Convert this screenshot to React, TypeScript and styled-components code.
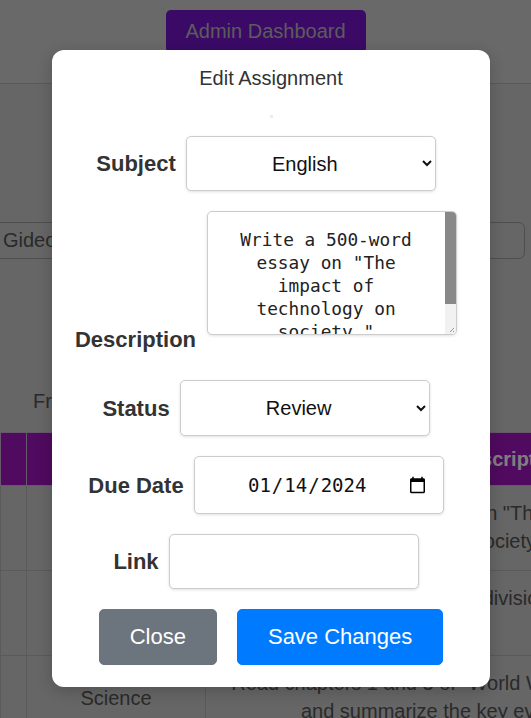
import React from "react";
import styled, { createGlobalStyle } from "styled-components";

const Global = createGlobalStyle`
  html, body { margin: 0; padding: 0; }
  body {
    background: #cccccc;
    font-family: "Liberation Sans", Arial, sans-serif;
    overflow: hidden;
  }
`;

const Page = styled.div`
  position: relative;
  width: 531px;
  height: 718px;
  overflow: hidden;
`;

const TopBar = styled.header`
  box-sizing: border-box;
  height: 84px;
  padding-top: 10px;
  background: #d2d2d2;
  border-bottom: 1px solid #b4b4b4;
  display: flex;
  justify-content: center;
  align-items: flex-start;
`;

const AdminButton = styled.button`
  width: 200px;
  padding: 10px 0;
  border: none;
  border-radius: 5px;
  background: #7414cc;
  color: #b8b8b8;
  font-family: "Liberation Sans", Arial, sans-serif;
  font-size: 20px;
  line-height: 23px;
`;

const SearchRow = styled.div`
  margin-top: 138px;
  display: flex;
  padding-right: 6px;
`;

const SearchInput = styled.input`
  box-sizing: border-box;
  flex: 1;
  height: 37px;
  margin-left: -8px;
  padding: 0 10px;
  border: 1px solid #9e9e9e;
  border-radius: 6px;
  background: transparent;
  color: #555;
  font-family: "Liberation Sans", Arial, sans-serif;
  font-size: 20px;
`;

const FilterText = styled.div`
  margin-top: 131px;
  padding-left: 33px;
  font-size: 20px;
  line-height: 23px;
  color: #555;
`;

const Table = styled.table`
  margin-top: 19px;
  border-collapse: collapse;
  table-layout: fixed;
  width: 815px;
  font-size: 20px;
`;

const HeadCell = styled.th<{ $w: number; $narrow?: boolean }>`
  width: ${(p) => p.$w}px;
  height: 53px;
  box-sizing: border-box;
  padding: ${(p) => (p.$narrow ? "0" : "0 15px")};
  background: #a014be;
  color: #ffffff;
  border: 1px solid #d0b0d8;
  font-weight: bold;
  text-align: center;
`;

const BodyCell = styled.td<{ $narrow?: boolean; $top?: boolean }>`
  height: 85px;
  box-sizing: border-box;
  padding: ${(p) => (p.$narrow ? "0" : p.$top ? "13px 15px 0" : "0 15px")};
  border: 1px solid #b4b4b4;
  color: #555;
  line-height: 28px;
  text-align: center;
  vertical-align: ${(p) => (p.$top ? "top" : "middle")};
`;

const Backdrop = styled.div`
  position: absolute;
  inset: 0;
  background: rgba(0, 0, 0, 0.5);
`;

const Modal = styled.div`
  box-sizing: border-box;
  width: 438px;
  margin: 50px 0 0 52px;
  padding: 16px 0 22px 0;
  background: #ffffff;
  border-radius: 12px;
  box-shadow: 0 4px 16px rgba(0, 0, 0, 0.2);
`;

const Title = styled.h2`
  margin: 0;
  font-size: 20px;
  font-weight: normal;
  line-height: 24px;
  color: #333;
  text-align: center;
`;

const Dot = styled.div`
  width: 3px;
  height: 3px;
  margin: 25px auto 0;
  background: #ececec;
`;

const Form = styled.form`
  margin-top: 18px;
  display: flex;
  flex-direction: column;
  gap: 20px;
`;

const Row = styled.div<{ $bottom?: boolean; $buttons?: boolean }>`
  display: flex;
  justify-content: center;
  align-items: ${(p) => (p.$bottom ? "flex-end" : "center")};
  gap: ${(p) => (p.$buttons ? "20px" : "10px")};
  padding-right: ${(p) => (p.$buttons ? "0" : "10px")};
  padding-bottom: ${(p) => (p.$bottom ? "8px" : "0")};
`;

const Label = styled.label`
  font-size: 22px;
  font-weight: bold;
  line-height: 25px;
  color: #333;
`;

const fieldBase = `
  box-sizing: border-box;
  width: 250px;
  border: 1px solid #cccccc;
  border-radius: 5px;
  background: #ffffff;
  box-shadow: 0 1px 3px rgba(0, 0, 0, 0.12);
  outline: none;
`;

const Select = styled.select<{ $h: number }>`
  ${fieldBase}
  height: ${(p) => p.$h}px;
  padding: 0 8px;
  color: #111;
  font-family: "Liberation Sans", Arial, sans-serif;
  font-size: 20px;
  text-align: center;
  text-align-last: center;
`;

const TextAreaBox = styled.div`
  position: relative;
  width: 250px;
  height: 124px;
  margin: 0 0 17px 1px;
`;

const TextArea = styled.textarea`
  ${fieldBase}
  display: block;
  height: 124px;
  padding: 16px 25px 16px 13px;
  color: #222;
  font-family: "DejaVu Sans Mono", "Liberation Mono", monospace;
  font-size: 17.8px;
  line-height: 23px;
  text-align: center;
  resize: none;
  overflow: hidden;
  scrollbar-width: none;
`;

const ScrollTrack = styled.div`
  position: absolute;
  top: 1px;
  right: 1px;
  bottom: 1px;
  width: 11px;
  display: flex;
  flex-direction: column;
  background: #f1f1f1;
  border-radius: 0 4px 4px 0;
  overflow: hidden;
`;

const ScrollThumb = styled.div`
  height: 92px;
  background: #888888;
`;

const Grip = styled.svg`
  margin-top: auto;
  width: 11px;
  height: 11px;
  display: block;
`;

const DateInput = styled.input`
  ${fieldBase}
  height: 58px;
  padding: 0 14px;
  color: #111;
  font-family: "DejaVu Sans Mono", "Liberation Mono", monospace;
  font-size: 19px;
  text-align: center;
`;

const TextInput = styled.input`
  ${fieldBase}
  height: 55px;
  padding: 0 12px;
  font-family: "Liberation Sans", Arial, sans-serif;
  font-size: 20px;
`;

const Button = styled.button<{ $primary?: boolean }>`
  height: 56px;
  padding: 0 30px;
  border: 1px solid ${(p) => (p.$primary ? "#007bff" : "#6c757d")};
  border-radius: 5px;
  background: ${(p) => (p.$primary ? "#007bff" : "#6c757d")};
  color: #ffffff;
  font-family: "Liberation Sans", Arial, sans-serif;
  font-size: 22px;
`;

export default function App() {
  return (
    <Page>
      <Global />
      <TopBar>
        <AdminButton>Admin Dashboard</AdminButton>
      </TopBar>
      <SearchRow>
        <SearchInput defaultValue="Gideon Mensah" />
      </SearchRow>
      <FilterText>From all subjects</FilterText>
      <Table>
        <thead>
          <tr>
            <HeadCell $w={26} $narrow></HeadCell>
            <HeadCell $w={179}>Subject</HeadCell>
            <HeadCell $w={610}>Description</HeadCell>
          </tr>
        </thead>
        <tbody>
          <tr>
            <BodyCell $narrow></BodyCell>
            <BodyCell>English</BodyCell>
            <BodyCell $top>
              Write a 500-word essay on "The impact of technology on society."
            </BodyCell>
          </tr>
          <tr>
            <BodyCell $narrow></BodyCell>
            <BodyCell>Math</BodyCell>
            <BodyCell $top>
              Practice all the long division problems in unit 4.
            </BodyCell>
          </tr>
          <tr>
            <BodyCell $narrow></BodyCell>
            <BodyCell>Science</BodyCell>
            <BodyCell $top>
              Read chapters 1 and 3 of "World War II: The Complete History" and
              summarize the key events of each chapter.
            </BodyCell>
          </tr>
        </tbody>
      </Table>

      <Backdrop>
        <Modal>
          <Title>Edit Assignment</Title>
          <Dot />
          <Form onSubmit={(e) => e.preventDefault()}>
            <Row>
              <Label>Subject</Label>
              <Select $h={55} defaultValue="English">
                <option>English</option>
                <option>Math</option>
                <option>Science</option>
              </Select>
            </Row>
            <Row $bottom>
              <Label>Description</Label>
              <TextAreaBox>
                <TextArea
                  defaultValue={
                    'Write a 500-word essay on "The impact of technology on society."'
                  }
                />
                <ScrollTrack>
                  <ScrollThumb />
                  <Grip viewBox="0 0 11 11">
                    <path
                      d="M9 5 L5 9 M9 8 L8 9"
                      stroke="#9a9a9a"
                      strokeWidth="1"
                      fill="none"
                    />
                  </Grip>
                </ScrollTrack>
              </TextAreaBox>
            </Row>
            <Row>
              <Label>Status</Label>
              <Select $h={56} defaultValue="Review">
                <option>Pending</option>
                <option>Review</option>
                <option>Completed</option>
              </Select>
            </Row>
            <Row>
              <Label>Due Date</Label>
              <DateInput type="date" defaultValue="2024-01-14" />
            </Row>
            <Row>
              <Label>Link</Label>
              <TextInput type="text" />
            </Row>
            <Row $buttons>
              <Button type="button">Close</Button>
              <Button type="button" $primary>
                Save Changes
              </Button>
            </Row>
          </Form>
        </Modal>
      </Backdrop>
    </Page>
  );
}
